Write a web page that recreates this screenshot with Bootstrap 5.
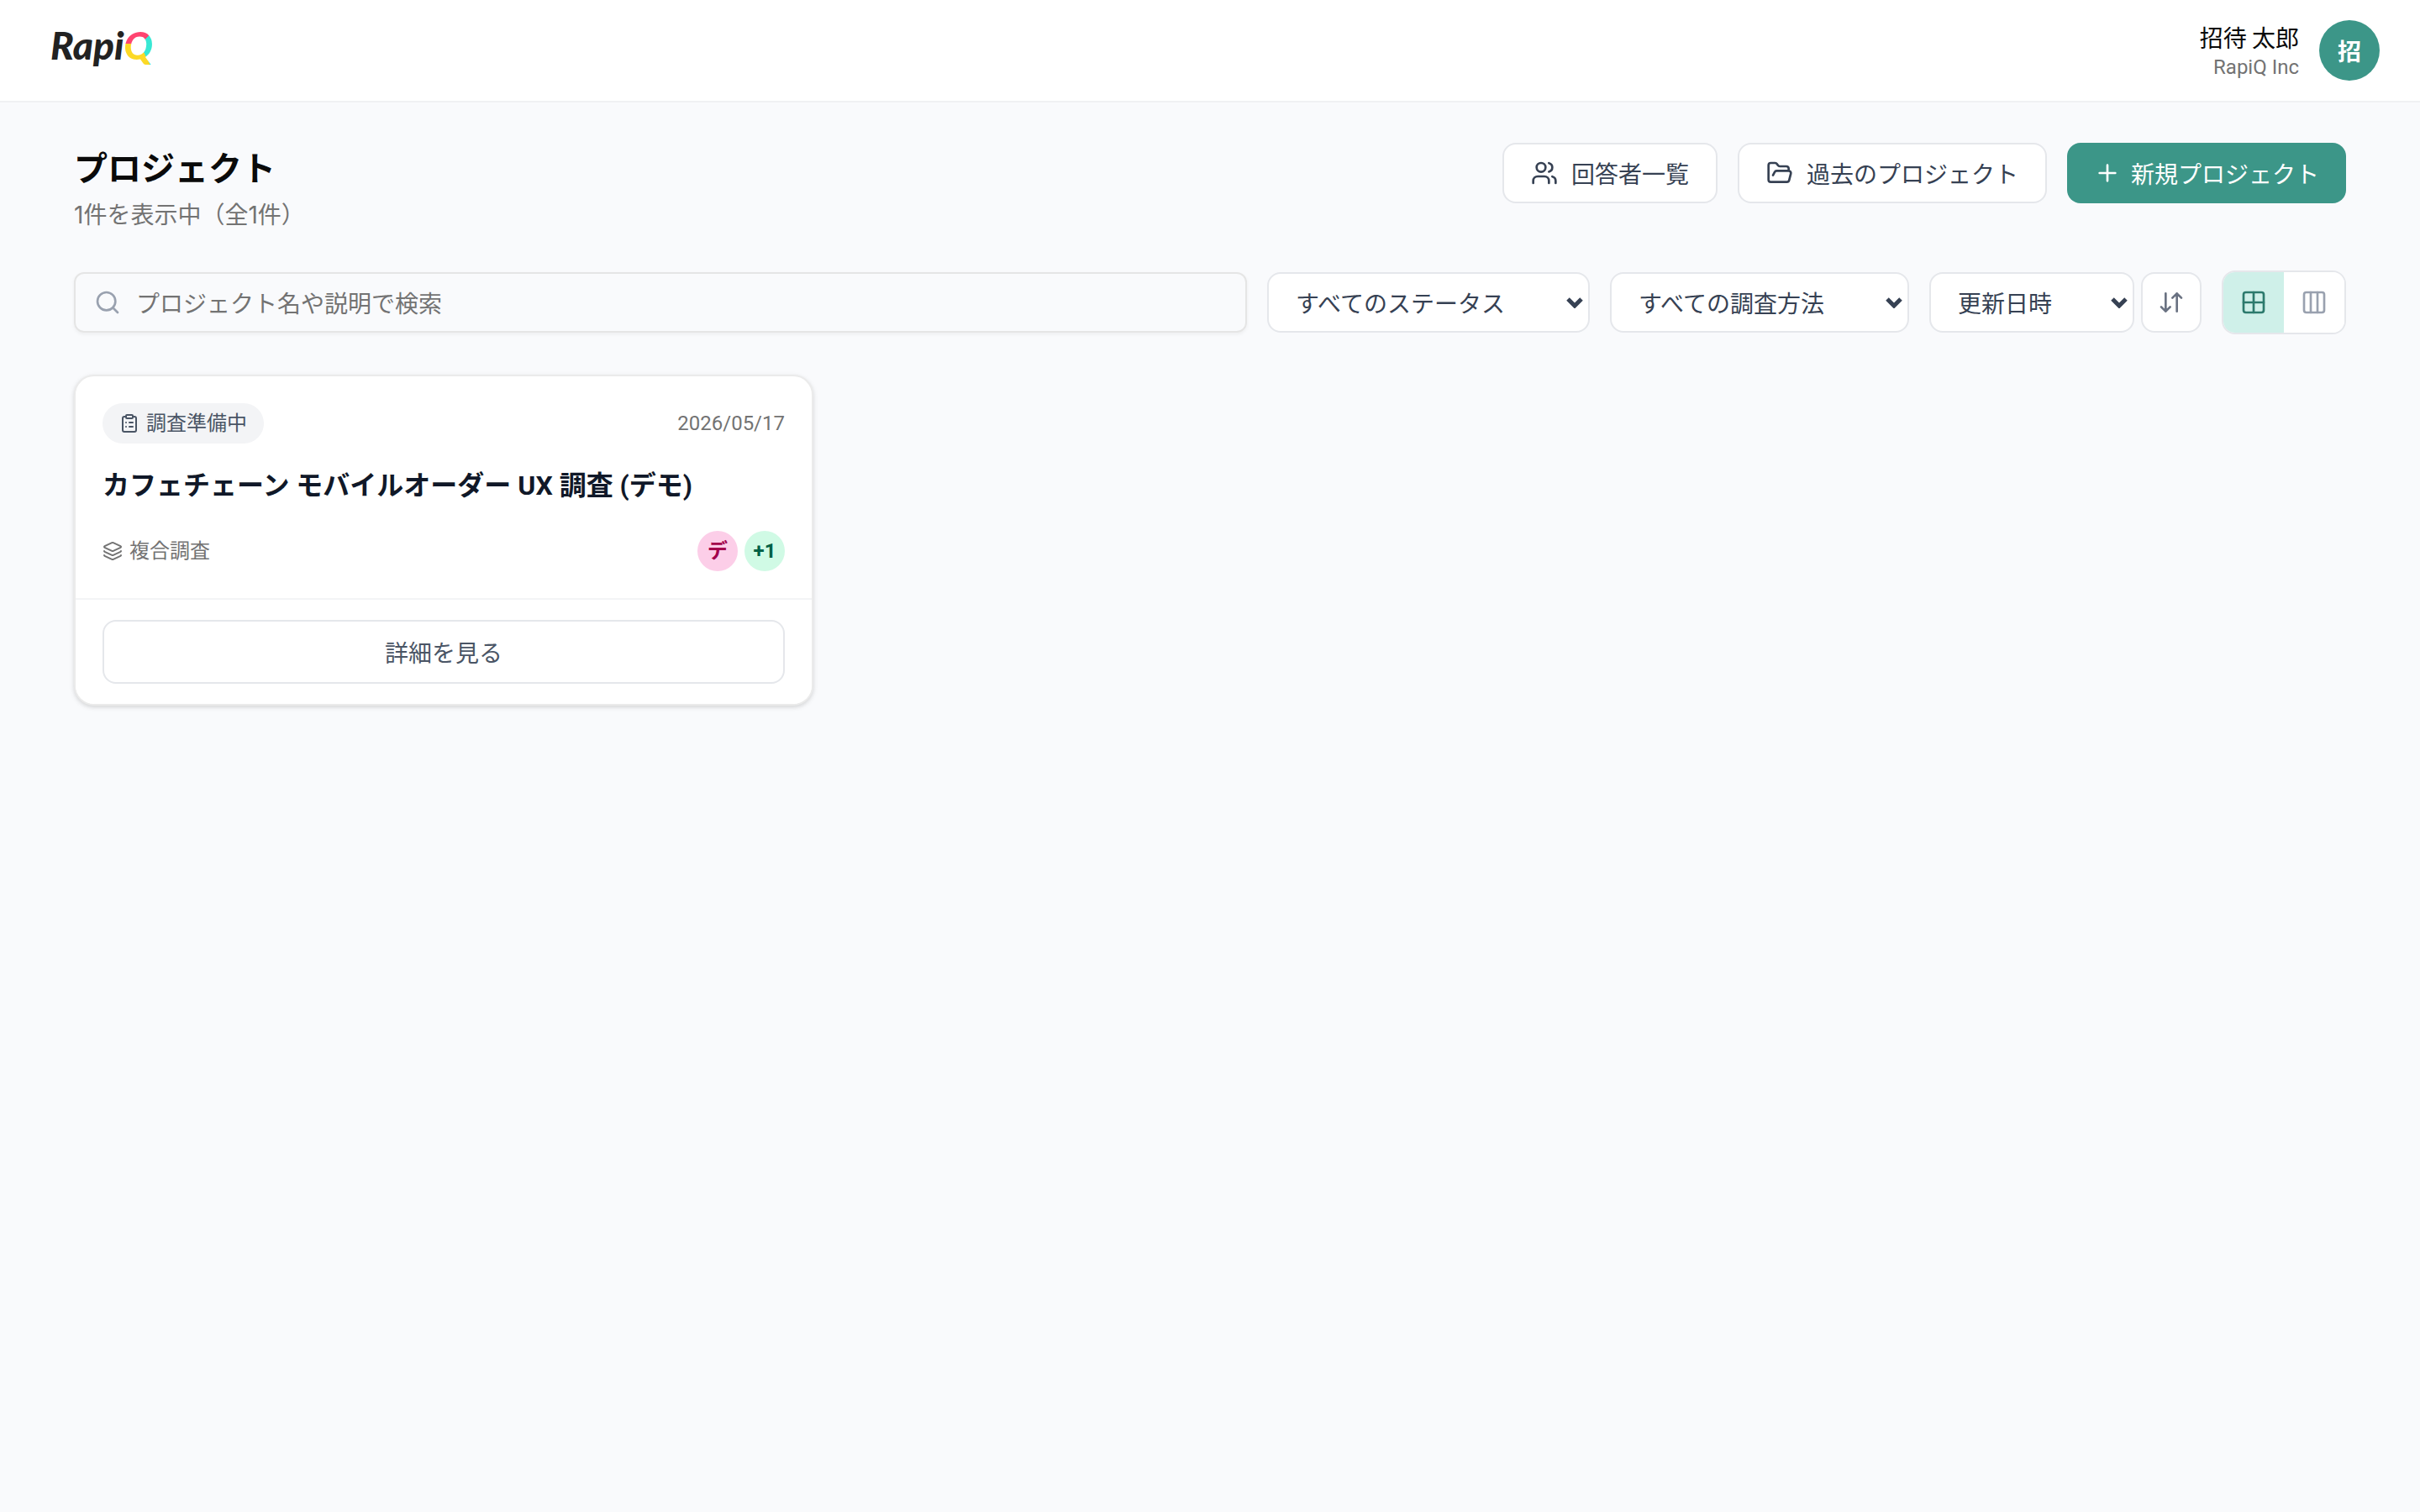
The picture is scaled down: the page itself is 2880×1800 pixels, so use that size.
<!DOCTYPE html>
<html lang="ja">
<head>
<meta charset="utf-8">
<meta name="viewport" content="width=device-width, initial-scale=1">
<title>プロジェクト | RapiQ</title>
<link href="https://cdn.jsdelivr.net/npm/bootstrap@5.3.0/dist/css/bootstrap.min.css" rel="stylesheet">
<style>
  :root {
    --teal: #3c9688;
    --line: #e5e7eb;
    --ink: #364153;
    --muted: #737373;
  }
  body {
    background: #f9fafc;
    color: #0a0a0a;
    font-family: "Noto Sans CJK JP", sans-serif;
    font-size: 28px;
    line-height: 40px;
  }
  svg { flex: none; fill: none; stroke: currentColor; stroke-width: 2; stroke-linecap: round; stroke-linejoin: round; }
  .ico { width: 32px; height: 32px; }
  .ico-sm { width: 24px; height: 24px; }
  .topbar { background: #fff; border-bottom: 2px solid #f0f1f3; padding: 24px 48px 24px 60px; }
  .brand { font: italic 900 46px/60px Lato, sans-serif; color: #222; text-decoration: none; }
  .brand-q {
    background: conic-gradient(from 40deg at 52% 50%, #38e8d4 0 115deg, #fcd926 115deg 235deg, #ff4470 235deg);
    -webkit-background-clip: text;
    background-clip: text;
    color: transparent;
    padding-right: 4px;
  }
  .text-24 { font-family: Roboto, "Noto Sans CJK JP", sans-serif; font-size: 24px; line-height: 32px; }
  .text-soft { color: var(--muted); }
  .avatar { width: 72px; height: 72px; background: var(--teal); color: #fff; font-weight: 600; }
  .page { padding: 48px 88px; }
  .page-title { font-size: 40px; line-height: 56px; font-weight: 700; margin-bottom: 8px; }
  .count { font-family: Inter, "Noto Sans CJK JP", sans-serif; line-height: 44px; }
  .gap-24 { gap: 24px; }
  .gap-12 { gap: 12px; }
  .head { margin-bottom: 44px; }
  .btn-app {
    --bs-btn-font-size: 28px;
    --bs-btn-line-height: 40px;
    --bs-btn-padding-y: 14px;
    --bs-btn-padding-x: 32px;
    --bs-btn-border-width: 2px;
    --bs-btn-border-color: var(--line);
    --bs-btn-border-radius: 16px;
    --bs-btn-bg: #fff;
    --bs-btn-color: var(--ink);
    --bs-btn-hover-bg: #f3f4f6;
    --bs-btn-hover-color: var(--ink);
    --bs-btn-hover-border-color: var(--line);
    white-space: nowrap;
  }
  .btn-app.wide-gap { gap: 16px; }
  .btn-new {
    --bs-btn-border-width: 0;
    --bs-btn-padding-y: 16px;
    --bs-btn-bg: var(--teal);
    --bs-btn-color: #fff;
    --bs-btn-hover-bg: #2f8073;
    --bs-btn-hover-color: #fff;
  }
  .btn-sort { --bs-btn-padding-x: 18px; --bs-btn-padding-y: 18px; --bs-btn-color: #6a7282; }
  .filters { margin-bottom: 48px; }
  .search-box { height: 72px; border: 2px solid #e5e5e5; border-radius: 12px; padding: 0 22px; gap: 18px; color: #99a1af; box-shadow: 0 2px 4px rgba(0,0,0,.05); }
  .search-box input { flex: 1; align-self: stretch; min-width: 0; border: 0; outline: 0; background: transparent; color: #0a0a0a; padding: 0; }
  .search-box input::placeholder { color: var(--muted); opacity: 1; }
  .pick {
    height: 72px; width: auto;
    border: 2px solid var(--line);
    border-radius: 16px;
    padding: 0 60px 0 32px;
    font-size: 28px;
    line-height: 40px;
    color: var(--ink);
    background: #fff url("data:image/svg+xml,%3Csvg xmlns='http://www.w3.org/2000/svg' viewBox='0 0 20 14'%3E%3Cpath d='M2 3l8 8 8-8' fill='none' stroke='%23364153' stroke-width='5'/%3E%3C/svg%3E") no-repeat right 6px center / 20px 14px;
  }
  .pick-status { width: 384px; }
  .pick-method { width: 356px; }
  .pick-sort { width: 244px; }
  .view-switch { border: 2px solid var(--line); border-radius: 16px; overflow: hidden; background: #fff; }
  .view-switch button { width: 72px; height: 72px; padding: 0; border: 0; background: #fff; color: #99a1af; }
  .view-switch button.active { background: #cff0e9; color: #2c7a6d; }
  .project-grid { --bs-gutter-x: 32px; --bs-gutter-y: 32px; }
  .project { --bs-card-border-width: 2px; --bs-card-border-color: #ebebeb; --bs-card-border-radius: 24px; --bs-card-inner-border-radius: 22px; box-shadow: 0 2px 6px rgba(0,0,0,.1), 0 2px 4px rgba(0,0,0,.06); }
  .project .card-body { padding: 32px; color: #101828; }
  .project .card-footer { padding: 24px 32px; background: #fff; border-top: 2px solid #f3f4f6; }
  .status { gap: 8px; height: 48px; padding: 0 20px; background: #f3f4f6; color: #4a5565; }
  .project-name { font-family: Roboto, "Noto Sans CJK JP", sans-serif; font-size: 32px; line-height: 48px; font-weight: 700; margin: 26px 0 30px; }
  .member { width: 48px; height: 48px; font-family: Roboto, "Noto Sans CJK JP", sans-serif; font-size: 24px; line-height: 32px; font-weight: 700; }
  .member-pink { background: #fccee8; color: #a3004c; }
  .member-green { background: #d0fae5; color: #006045; }
  .btn-detail { --bs-btn-padding-y: 16px; --bs-btn-color: #4a5565; }
</style>
<script src="https://cdn.jsdelivr.net/npm/bootstrap@5.3.0/dist/js/bootstrap.bundle.min.js"></script>
</head>
<body>
<header class="topbar d-flex align-items-center justify-content-between">
  <a class="brand align-self-start" href="#">Rapi<span class="brand-q">Q</span></a>
  <div class="d-flex align-items-center gap-24">
    <div class="text-end">
      <div>招待 太郎</div>
      <div class="text-24 text-soft">RapiQ Inc</div>
    </div>
    <div class="avatar rounded-circle d-flex align-items-center justify-content-center">招</div>
  </div>
</header>

<main class="page">
  <div class="head d-flex flex-wrap justify-content-between align-items-start gap-24">
    <div>
      <h1 class="page-title">プロジェクト</h1>
      <p class="count text-soft mb-0">1件を表示中（全1件）</p>
    </div>
    <div class="d-flex flex-wrap gap-24">
      <a href="#" class="btn btn-app wide-gap d-flex align-items-center">
        <svg class="ico" viewBox="0 0 24 24"><path d="M16 21v-2a4 4 0 0 0-4-4H6a4 4 0 0 0-4 4v2"/><circle cx="9" cy="7" r="4"/><path d="M22 21v-2a4 4 0 0 0-3-3.87M16 3.13a4 4 0 0 1 0 7.75"/></svg>
        回答者一覧</a>
      <a href="#" class="btn btn-app wide-gap d-flex align-items-center">
        <svg class="ico" viewBox="0 0 24 24"><path d="m6 14 1.5-2.9A2 2 0 0 1 9.24 10H20a2 2 0 0 1 1.94 2.5l-1.54 6a2 2 0 0 1-1.95 1.5H4a2 2 0 0 1-2-2V5a2 2 0 0 1 2-2h3.9a2 2 0 0 1 1.69.9l.81 1.2a2 2 0 0 0 1.67.9H18a2 2 0 0 1 2 2v2"/></svg>
        過去のプロジェクト</a>
      <button type="button" class="btn btn-app btn-new d-flex align-items-center gap-12">
        <svg class="ico" viewBox="0 0 24 24"><path d="M5 12h14M12 5v14"/></svg>
        新規プロジェクト</button>
    </div>
  </div>

  <form class="filters d-flex flex-wrap align-items-center gap-24">
    <label class="search-box d-flex align-items-center flex-grow-1">
      <svg class="ico" viewBox="0 0 24 24"><circle cx="11" cy="11" r="8"/><path d="m21 21-4.3-4.3"/></svg>
      <input type="text" aria-label="検索" placeholder="プロジェクト名や説明で検索">
    </label>
    <select class="pick pick-status form-select" aria-label="ステータス"><option>すべてのステータス</option></select>
    <select class="pick pick-method form-select" aria-label="調査方法"><option>すべての調査方法</option></select>
    <div class="d-flex gap-2">
      <select class="pick pick-sort form-select" aria-label="並び替え"><option>更新日時</option></select>
      <button type="button" class="btn btn-app btn-sort d-flex" aria-label="昇順と降順の切り替え">
        <svg class="ico" viewBox="0 0 24 24"><path d="m3 16 4 4 4-4M7 20V4M21 8l-4-4-4 4M17 4v16"/></svg>
      </button>
    </div>
    <div class="view-switch d-flex">
      <button type="button" class="active d-flex align-items-center justify-content-center" aria-label="グリッド表示">
        <svg class="ico" viewBox="0 0 24 24"><rect x="3" y="3" width="18" height="18" rx="2"/><path d="M3 12h18M12 3v18"/></svg>
      </button>
      <button type="button" class="d-flex align-items-center justify-content-center" aria-label="カンバン表示">
        <svg class="ico" viewBox="0 0 24 24"><rect x="3" y="3" width="18" height="18" rx="2"/><path d="M9 3v18M15 3v18"/></svg>
      </button>
    </div>
  </form>

  <div class="project-grid row row-cols-1 row-cols-md-2 row-cols-xl-3">
    <div class="col">
      <article class="project card">
        <div class="card-body">
          <div class="d-flex align-items-center justify-content-between text-24">
            <span class="status rounded-pill d-flex align-items-center">
              <svg class="ico-sm" viewBox="0 0 24 24"><rect x="8" y="2" width="8" height="4" rx="1"/><path d="M16 4h2a2 2 0 0 1 2 2v14a2 2 0 0 1-2 2H6a2 2 0 0 1-2-2V6a2 2 0 0 1 2-2h2M12 11h4M12 16h4M8 11h.01M8 16h.01"/></svg>
              調査準備中</span>
            <time class="text-soft" datetime="2026-05-17">2026/05/17</time>
          </div>
          <h2 class="project-name">カフェチェーン モバイルオーダー UX 調査 (デモ)</h2>
          <div class="d-flex align-items-center justify-content-between">
            <div class="text-24 text-soft d-flex align-items-center gap-2">
              <svg class="ico-sm" viewBox="0 0 24 24"><path d="M12.83 2.18a2 2 0 0 0-1.66 0L2.6 6.08a1 1 0 0 0 0 1.83l8.58 3.91a2 2 0 0 0 1.66 0l8.58-3.9a1 1 0 0 0 0-1.83Z"/><path d="M2 12a1 1 0 0 0 .58.91l8.6 3.91a2 2 0 0 0 1.65 0l8.58-3.9A1 1 0 0 0 22 12"/><path d="M2 17a1 1 0 0 0 .58.91l8.6 3.91a2 2 0 0 0 1.65 0l8.58-3.9A1 1 0 0 0 22 17"/></svg>
              複合調査</div>
            <div class="d-flex gap-2">
              <span class="member member-pink rounded-circle d-flex align-items-center justify-content-center">デ</span>
              <span class="member member-green rounded-circle d-flex align-items-center justify-content-center">+1</span>
            </div>
          </div>
        </div>
        <div class="card-footer">
          <button type="button" class="btn btn-app btn-detail w-100">詳細を見る</button>
        </div>
      </article>
    </div>
  </div>
</main>
</body>
</html>
